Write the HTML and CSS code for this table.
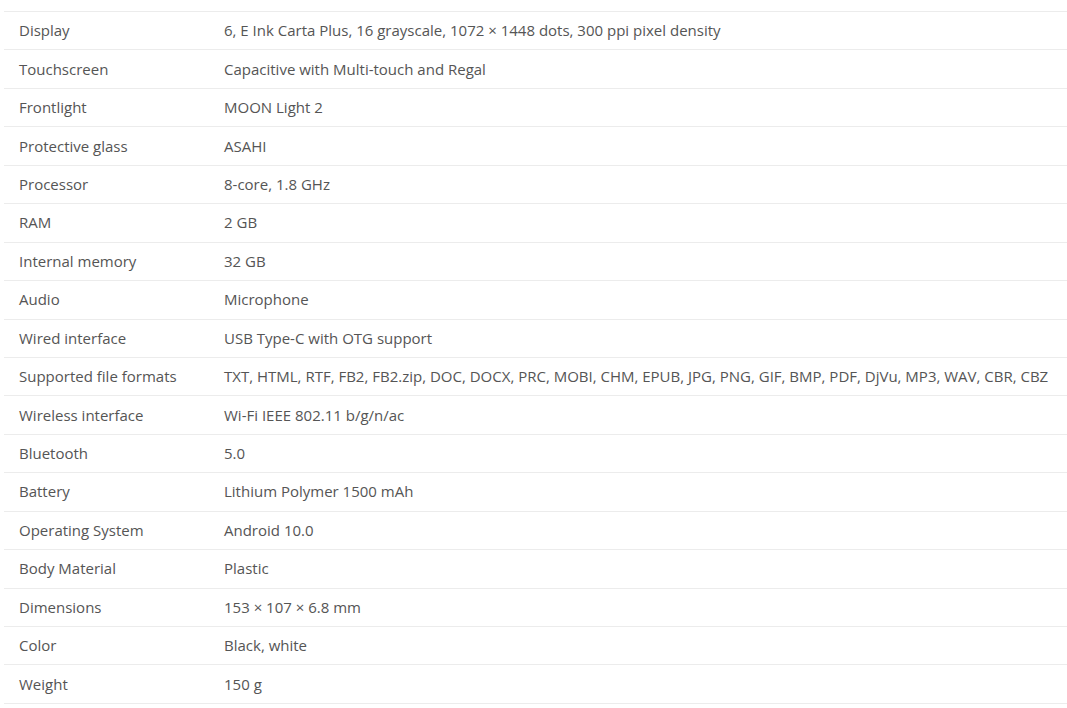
FILE: index.html
```html
<!DOCTYPE html>
<html>
<head>
<meta charset="utf-8">
<link rel="stylesheet" href="styles.css">
</head>
<body>
<div class="wrap">
<table class="specs">
<tbody>
<tr><td class="k">Display</td><td>6, E Ink Carta Plus, 16 grayscale, 1072 × 1448 dots, 300 ppi pixel density</td></tr>
<tr><td class="k">Touchscreen</td><td>Capacitive with Multi-touch and Regal</td></tr>
<tr><td class="k">Frontlight</td><td>MOON Light 2</td></tr>
<tr><td class="k">Protective glass</td><td>ASAHI</td></tr>
<tr><td class="k">Processor</td><td>8-core, 1.8 GHz</td></tr>
<tr><td class="k">RAM</td><td>2 GB</td></tr>
<tr><td class="k">Internal memory</td><td>32 GB</td></tr>
<tr><td class="k">Audio</td><td>Microphone</td></tr>
<tr><td class="k">Wired interface</td><td>USB Type-C with OTG support</td></tr>
<tr><td class="k">Supported file formats</td><td>TXT, HTML, RTF, FB2, FB2.zip, DOC, DOCX, PRC, MOBI, CHM, EPUB, JPG, PNG, GIF, BMP, PDF, DjVu, MP3, WAV, CBR, CBZ</td></tr>
<tr><td class="k">Wireless interface</td><td>Wi-Fi IEEE 802.11 b/g/n/ac</td></tr>
<tr><td class="k">Bluetooth</td><td>5.0</td></tr>
<tr><td class="k">Battery</td><td>Lithium Polymer 1500 mAh</td></tr>
<tr><td class="k">Operating System</td><td>Android 10.0</td></tr>
<tr><td class="k">Body Material</td><td>Plastic</td></tr>
<tr><td class="k">Dimensions</td><td>153 × 107 × 6.8 mm</td></tr>
<tr><td class="k">Color</td><td>Black, white</td></tr>
<tr><td class="k">Weight</td><td>150 g</td></tr>
</tbody>
</table>
</div>
</body>
</html>
```
FILE: styles.css
```css
html, body {
  margin: 0;
  padding: 0;
  background: #fff;
}
body {
  font-family: "Open Sans", "Liberation Sans", sans-serif;
  font-size: 15px;
  color: #555;
}
.wrap {
  padding: 11px 0 0 4px;
}
.specs {
  width: 1063px;
  border-collapse: collapse;
}
.specs td {
  border-top: 1px solid #ececec;
  border-bottom: 1px solid #ececec;
  padding: 8.22px 15px 9.22px;
  line-height: 20px;
  height: 20px;
  vertical-align: middle;
  white-space: nowrap;
}
.specs td.k {
  width: 175px;
}
```
